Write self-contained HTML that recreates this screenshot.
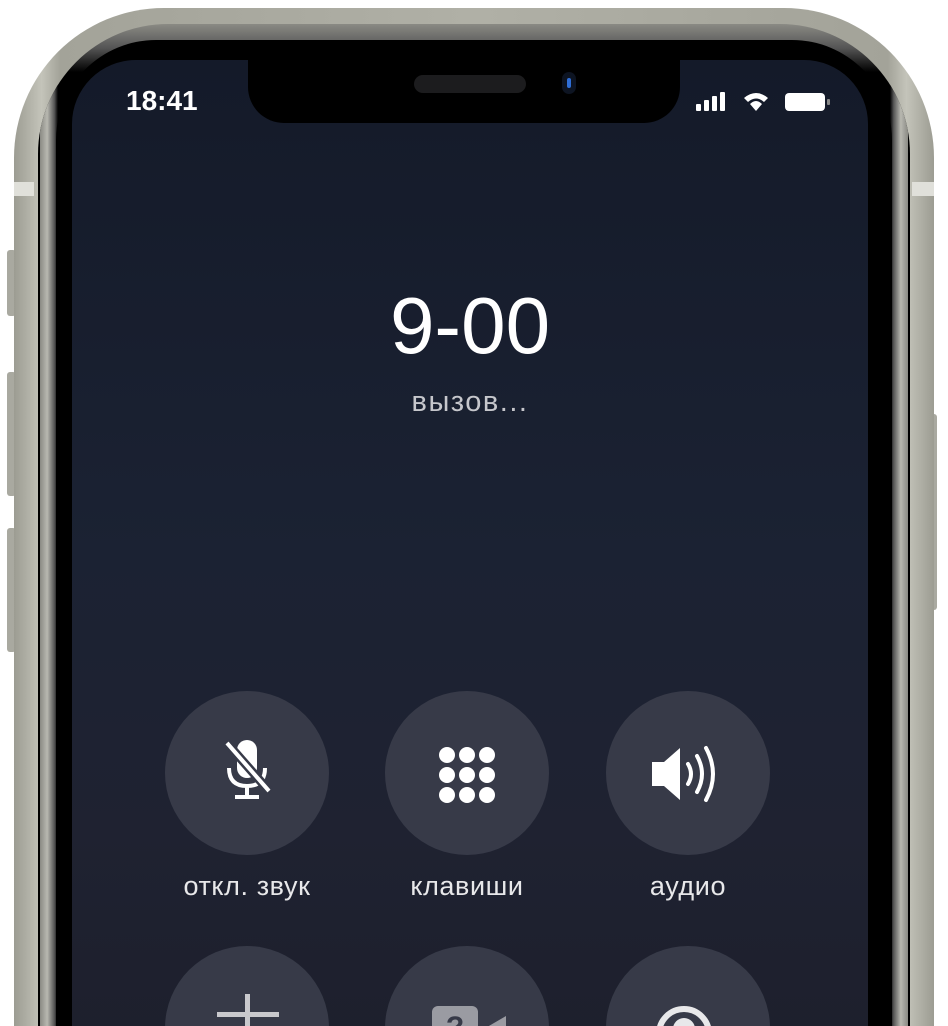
<!DOCTYPE html>
<html><head><meta charset="utf-8"><style>
html,body{margin:0;padding:0;background:#fff;width:948px;height:1026px;overflow:hidden;position:relative;font-family:"Liberation Sans",sans-serif}
#w{position:absolute;left:0;top:0;width:948px;height:1026px;overflow:hidden}
.a{position:absolute}
.frame{left:14px;top:8px;width:920px;height:1200px;border-radius:150px;background:linear-gradient(90deg,#9c9c92,#c4c4ba 3%,#a3a399 5%,#b0b0a6 50%,#a3a399 95%,#c4c4ba 97%,#9c9c92)}
.f3{left:38px;top:24px;width:872px;height:1200px;border-radius:130px;background:linear-gradient(#8a8a84,#555 2%,#000 4%);overflow:hidden}
.bez{left:56px;top:40px;width:836px;height:1200px;border-radius:100px;background:#000}
.screen{left:72px;top:60px;width:796px;height:1100px;border-radius:64px;background:linear-gradient(#141a29,#1b2233 45%,#1f2231 70%,#1c1e2a);overflow:hidden}
.notch{left:176px;top:-10px;width:432px;height:73px;background:#000;border-radius:0 0 36px 36px}
.btn{width:164px;height:164px;border-radius:50%;background:#373a48}
.lbl{color:#e8e8ea;font-size:27px;letter-spacing:0.6px;text-align:center;width:240px}
.sb{background:#a9a9a0;border-radius:3px}
</style></head><body><div id="w">
<div class="a sb" style="left:7px;top:250px;width:9px;height:66px"></div>
<div class="a sb" style="left:7px;top:372px;width:9px;height:124px"></div>
<div class="a sb" style="left:7px;top:528px;width:9px;height:124px"></div>
<div class="a sb" style="left:928px;top:414px;width:9px;height:196px"></div>
<div class="a frame"></div>
<div class="a" style="left:14px;top:182px;width:20px;height:14px;background:#e0e0da"></div>
<div class="a" style="left:912px;top:182px;width:22px;height:14px;background:#e0e0da"></div>
<div class="a f3">
 <div class="a" style="left:2px;top:0;width:18px;height:1200px;background:linear-gradient(90deg,#8a8a84,#b8b8b0 40%,#555 80%,#000)"></div>
 <div class="a" style="right:2px;top:0;width:18px;height:1200px;background:linear-gradient(270deg,#8a8a84,#b8b8b0 40%,#555 80%,#000)"></div>
</div>
<div class="a bez"></div>
<div class="a screen">
 <div class="a notch"></div>
 <div class="a" style="left:342px;top:15px;width:112px;height:18px;border-radius:9px;background:#1c1c1e"></div>
 <div class="a" style="left:490px;top:12px;width:14px;height:22px;border-radius:7px;background:#0d1422"><div style="margin:6px 5px;width:4px;height:10px;border-radius:2px;background:#2f6ed6"></div></div>
 <div class="a" style="left:54px;top:25px;color:#fff;font-size:28px;font-weight:bold">18:41</div>
 <svg class="a" style="left:624px;top:30px" width="140" height="24" viewBox="0 0 140 24">
  <rect x="0" y="14" width="5" height="7" rx="1" fill="#fff"/><rect x="8" y="10" width="5" height="11" rx="1" fill="#fff"/><rect x="16" y="6" width="5" height="15" rx="1" fill="#fff"/><rect x="24" y="2" width="5" height="19" rx="1" fill="#fff"/>
  <path d="M48 8 Q60 -2 72 8 L68 12 Q60 5 52 12Z M54 14 Q60 8 66 14 L60 21Z" fill="#fff"/>
  <rect x="89" y="3" width="40" height="18" rx="4" fill="#fff"/><rect x="131" y="9" width="3" height="6" rx="1" fill="#888"/>
 </svg>
 <div class="a" style="left:0;width:796px;top:220px;text-align:center;color:#fff;font-size:80px;font-weight:300">9-00</div>
 <div class="a" style="left:0;width:796px;top:326px;text-align:center;color:#c6c7cc;font-size:29px;letter-spacing:1.5px">вызов...</div>
 <div class="a btn" style="left:93px;top:631px"></div>
 <div class="a btn" style="left:313px;top:631px"></div>
 <div class="a btn" style="left:534px;top:631px"></div>
 <div class="a btn" style="left:93px;top:886px"></div>
 <div class="a btn" style="left:313px;top:886px"></div>
 <div class="a btn" style="left:534px;top:886px"></div>
 <svg class="a" style="left:140px;top:676px" width="70" height="74" viewBox="0 0 70 74">
  <rect x="25" y="4" width="20" height="38" rx="10" fill="#fff"/>
  <path d="M17 32 Q17 50 35 50 Q53 50 53 32" fill="none" stroke="#fff" stroke-width="4"/>
  <path d="M35 50 V60 M23 61 H47" stroke="#fff" stroke-width="4"/>
  <path d="M14 6 L58 56" stroke="#373a48" stroke-width="9"/>
  <path d="M15 7 L57 55" stroke="#fff" stroke-width="4"/>
 </svg>
 <svg class="a" style="left:360px;top:680px" width="70" height="70" viewBox="0 0 70 70">
  <g fill="#fff"><circle cx="15" cy="15" r="8"/><circle cx="35" cy="15" r="8"/><circle cx="55" cy="15" r="8"/><circle cx="15" cy="35" r="8"/><circle cx="35" cy="35" r="8"/><circle cx="55" cy="35" r="8"/><circle cx="15" cy="55" r="8"/><circle cx="35" cy="55" r="8"/><circle cx="55" cy="55" r="8"/></g>
 </svg>
 <svg class="a" style="left:578px;top:680px" width="80" height="70" viewBox="0 0 80 70">
  <path d="M2 22 H14 L30 8 V60 L14 46 H2Z" fill="#fff"/>
  <path d="M38 24 Q44 34 38 44" fill="none" stroke="#fff" stroke-width="4" stroke-linecap="round"/>
  <path d="M47 16 Q57 34 47 52" fill="none" stroke="#fff" stroke-width="4" stroke-linecap="round"/>
  <path d="M56 8 Q70 34 56 60" fill="none" stroke="#fff" stroke-width="4" stroke-linecap="round"/>
 </svg>
 <div class="a lbl" style="left:55px;top:811px">откл. звук</div>
 <div class="a lbl" style="left:275px;top:811px">клавиши</div>
 <div class="a lbl" style="left:496px;top:811px">аудио</div>
 <div class="a" style="left:173px;top:934px;width:5px;height:40px;background:#c9c9cd"></div>
 <div class="a" style="left:145px;top:952px;width:62px;height:5px;background:#c9c9cd"></div>
 <div class="a" style="left:360px;top:946px;width:46px;height:40px;border-radius:6px;background:#9a9ba2;color:#373a48;font-weight:bold;font-size:30px;text-align:center;line-height:44px">?</div>
 <div class="a" style="left:410px;top:950px;width:0;height:0;border-right:24px solid #9a9ba2;border-top:14px solid transparent;border-bottom:14px solid transparent;margin-top:6px"></div>
 <div class="a" style="left:584px;top:946px;width:56px;height:56px;border-radius:50%;border:6px solid #e8e8ea;box-sizing:border-box"></div>
 <div class="a" style="left:601px;top:958px;width:22px;height:22px;border-radius:50%;background:#e8e8ea"></div>
</div>
</div></body></html>
